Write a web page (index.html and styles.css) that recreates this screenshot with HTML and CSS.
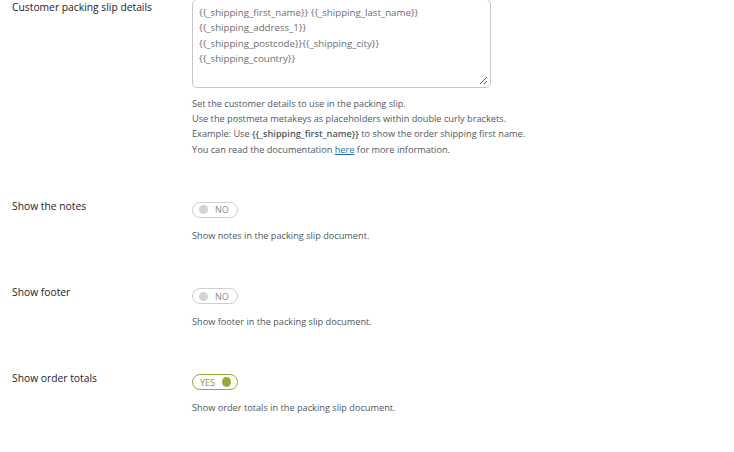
FILE: index.html
```html
<!DOCTYPE html>
<html>
<head>
<meta charset="utf-8">
<link rel="stylesheet" href="styles.css">
</head>
<body>
<div class="form">
  <div class="row row-first">
    <div class="label">Customer packing slip details</div>
    <div class="field">
      <div class="textarea-wrap">
        <div class="textarea">{{_shipping_first_name}} {{_shipping_last_name}}<br>{{_shipping_address_1}}<br>{{_shipping_postcode}}{{_shipping_city}}<br>{{_shipping_country}}</div>
        <svg class="grip" width="9" height="9" viewBox="0 0 9 9"><path d="M8 1 L1 8 M8 5 L5 8" stroke="#555" stroke-width="1"/></svg>
      </div>
      <p class="desc">Set the customer details to use in the packing slip.<br>Use the postmeta metakeys as placeholders within double curly brackets.<br>Example: Use <b>{{_shipping_first_name}}</b> to show the order shipping first name.<br>You can read the documentation <a href="#">here</a> for more information.</p>
    </div>
  </div>
  <div class="row">
    <div class="label">Show the notes</div>
    <div class="field">
      <div class="toggle off"><span class="knob"></span><span class="ttext">NO</span></div>
      <p class="desc">Show notes in the packing slip document.</p>
    </div>
  </div>
  <div class="row">
    <div class="label">Show footer</div>
    <div class="field">
      <div class="toggle off"><span class="knob"></span><span class="ttext">NO</span></div>
      <p class="desc">Show footer in the packing slip document.</p>
    </div>
  </div>
  <div class="row">
    <div class="label">Show order totals</div>
    <div class="field">
      <div class="toggle on"><span class="ttext">YES</span><span class="knob"></span></div>
      <p class="desc">Show order totals in the packing slip document.</p>
    </div>
  </div>
</div>
</body>
</html>
```
FILE: styles.css
```css
html, body {
  margin: 0;
  padding: 0;
  background: #fff;
}
body {
  font-family: "Open Sans", "Noto Sans", sans-serif;
  color: #1d2327;
}
.form {
  padding-left: 12px;
  margin-top: -1px;
}
.row {
  display: flex;
  padding-top: 45px;
}
.row-first {
  padding-top: 0;
}
.label {
  width: 180px;
  flex: none;
  font-size: 10.3px;
  line-height: 14px;
  padding-top: 1px;
}
.row:not(.row-first) .label {
  padding-top: 0;
  margin-top: -3px;
}
.field {
  flex: none;
}
.textarea-wrap {
  position: relative;
  width: 299px;
  height: 89px;
  border: 1px solid #c8c8c8;
  border-radius: 5px;
  box-sizing: border-box;
}
.textarea {
  padding: 5px 6px;
  font-size: 9.7px;
  line-height: 15.3px;
  color: #6e6e6e;
}
.grip {
  position: absolute;
  right: 2px;
  bottom: 2px;
}
.desc {
  margin: 8px 0 0;
  font-size: 9.2px;
  line-height: 15.2px;
  color: #50575e;
}
.desc b {
  font-weight: 600;
}
.desc a {
  color: #2271b1;
  text-decoration: underline;
}
.toggle {
  margin-top: 0;
  width: 46px;
  height: 16px;
  box-sizing: border-box;
  border: 1px solid #d0d0d0;
  border-radius: 8px;
  display: flex;
  align-items: center;
  gap: 7px;
  padding: 0 6px;
  font-size: 9px;
  color: #8a8a8a;
}
.toggle .knob {
  width: 9px;
  height: 9px;
  border-radius: 50%;
  background: #d4d4d4;
}
.toggle.on {
  border-color: #9aa83a;
  color: #8a9a30;
  justify-content: space-between;
  padding: 0 6px 0 7px;
}
.toggle.on .knob {
  width: 10px;
  height: 10px;
  background: #98a83a;
}
.row .toggle + .desc {
  margin-top: 10px;
}
```
